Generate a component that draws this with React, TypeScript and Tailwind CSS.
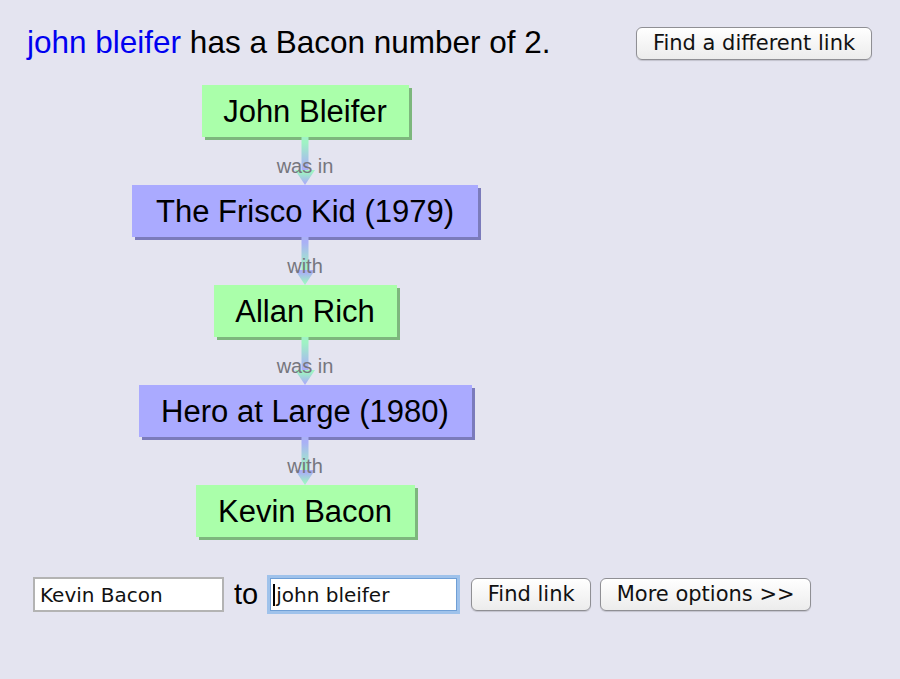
import React from "react";

type Node = { label: string; kind: "person" | "movie"; w: string };

const nodes: Node[] = [
  { label: "John Bleifer", kind: "person", w: "w-[207px]" },
  { label: "The Frisco Kid (1979)", kind: "movie", w: "w-[346px]" },
  { label: "Allan Rich", kind: "person", w: "w-[183px]" },
  { label: "Hero at Large (1980)", kind: "movie", w: "w-[333px]" },
  { label: "Kevin Bacon", kind: "person", w: "w-[219px]" },
];

const GREEN_LINE = "#9ff3c4";
const PURPLE_LINE = "#aab0f6";

function Arrow({ from, to, id }: { from: string; to: string; id: string }) {
  return (
    <svg width="24" height="48" viewBox="0 0 24 48" className="block">
      <defs>
        <linearGradient id={id} x1="0" y1="0" x2="0" y2="1">
          <stop offset="0.15" stopColor={from} />
          <stop offset="0.85" stopColor={to} />
        </linearGradient>
      </defs>
      <rect x="8.5" y="0" width="7" height="36" fill={`url(#${id})`} />
      <polygon points="2,33 22,33 12,48" fill={`url(#${id})`} />
    </svg>
  );
}

function Connector({ label, fromKind, idx }: { label: string; fromKind: Node["kind"]; idx: number }) {
  const from = fromKind === "person" ? GREEN_LINE : PURPLE_LINE;
  const to = fromKind === "person" ? PURPLE_LINE : GREEN_LINE;
  return (
    <div className="relative h-[48px] w-[120px] flex justify-center">
      <Arrow from={from} to={to} id={`g${idx}`} />
      <div className="absolute left-0 right-0 top-[17px] text-center text-[20px] leading-[24px] text-[#76767e] font-['Liberation_Sans',Arial,sans-serif]">
        {label}
      </div>
    </div>
  );
}

function NodeBox({ node }: { node: Node }) {
  const cls =
    node.kind === "person"
      ? "bg-[#aaffaa] shadow-[3px_3px_0_#7db77d]"
      : "bg-[#aaaaff] shadow-[3px_3px_0_#7b7bbb]";
  return (
    <div
      className={`${cls} ${node.w} h-[52px] pt-[2px] flex items-center justify-center text-[31px] text-black font-['Liberation_Sans',Arial,sans-serif]`}
    >
      {node.label}
    </div>
  );
}

const btn =
  "h-[33px] rounded-[6px] border border-[#8f8f94] bg-gradient-to-b from-white to-[#ececec] shadow-[0_1px_1px_rgba(0,0,0,0.15)] text-[21px] text-[#111] flex items-center justify-center font-['DejaVu_Sans',Verdana,sans-serif]";

export default function App() {
  return (
    <div className="min-h-[679px] w-[900px] bg-[#e4e4f0] pt-[24px]">
      <div className="w-[872px] pl-[27px] flex justify-between items-start">
        <div className="h-[36px] leading-[36px] text-[31.5px] text-black font-['Liberation_Sans',Arial,sans-serif]">
          <span className="text-[#0000f0]">john bleifer</span> has a Bacon number of 2.
        </div>
        <button className={`${btn} mt-[3px] w-[236px]`}>Find a different link</button>
      </div>

      <div className="w-[610px] mt-[25px] flex flex-col items-center">
        {nodes.map((n, i) => (
          <React.Fragment key={n.label}>
            <NodeBox node={n} />
            {i < nodes.length - 1 && (
              <Connector label={n.kind === "person" ? "was in" : "with"} fromKind={n.kind} idx={i} />
            )}
          </React.Fragment>
        ))}
      </div>

      <div className="mt-[40px] pl-[33px] flex items-center font-['DejaVu_Sans',Verdana,sans-serif]">
        <input
          readOnly
          defaultValue="Kevin Bacon"
          className="w-[191px] h-[35px] border-2 border-[#b3b3b3] bg-white pl-[5px] text-[20px] text-[#111] outline-none font-['DejaVu_Sans',Verdana,sans-serif]"
        />
        <span className="ml-[10px] mr-[9px] text-[29px] text-black leading-none font-['Liberation_Sans',Arial,sans-serif]">
          to
        </span>
        <div className="w-[187px] h-[33px] ml-[3px] border border-[#6f9fd6] bg-white shadow-[0_0_0_3px_#9fc2eb] flex items-center pl-[2px] text-[20px] text-[#111]">
          <span className="inline-block w-[2px] h-[22px] bg-black mr-[1px]" />
          <span>john bleifer</span>
        </div>
        <button className={`${btn} ml-[14px] w-[120px]`}>Find link</button>
        <button className={`${btn} ml-[9px] w-[211px]`}>More options &gt;&gt;</button>
      </div>
    </div>
  );
}
